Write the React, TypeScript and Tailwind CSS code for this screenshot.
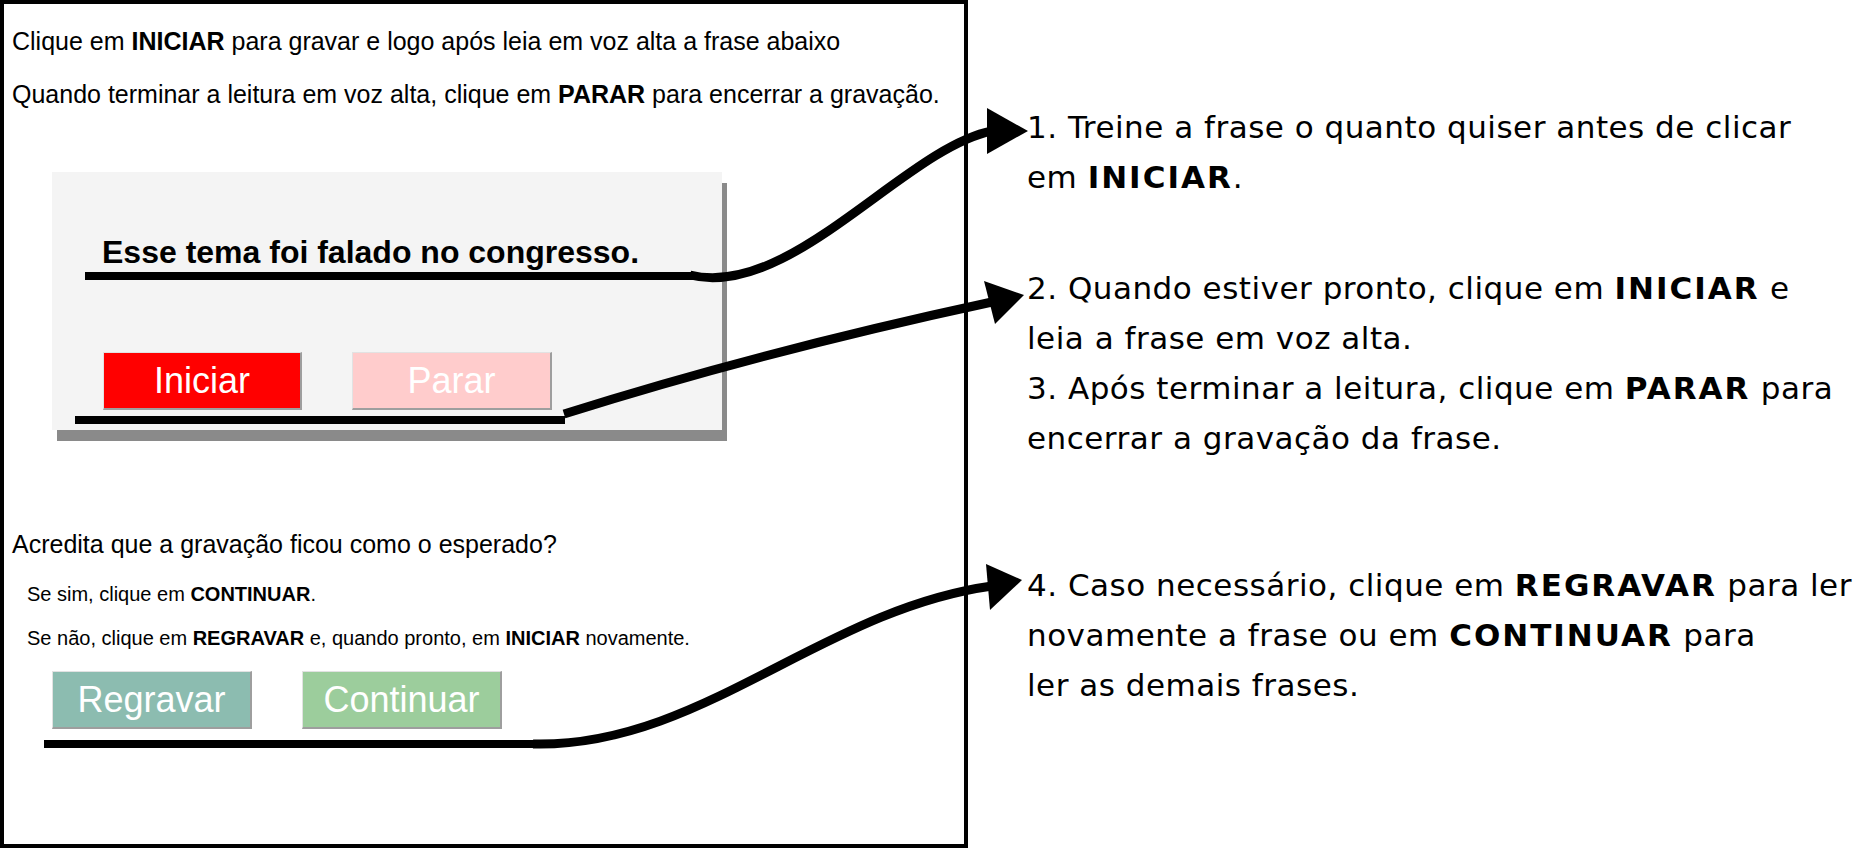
import React from "react";

function Btn({ className, children }: { className: string; children: React.ReactNode }) {
  return (
    <div
      className={
        "h-[58px] border-t border-l border-t-[#e2e2e2] border-l-[#e2e2e2] border-r-2 border-b-2 border-r-[#9e9e9e] border-b-[#9e9e9e] text-white text-center text-[36px] leading-[55px] " +
        className
      }
    >
      {children}
    </div>
  );
}

function B({ children }: { children: React.ReactNode }) {
  return <b className="tracking-[2px]">{children}</b>;
}

export default function App() {
  return (
    <div className="relative w-[1853px] h-[848px] bg-white overflow-hidden flex text-black font-['Liberation_Sans',Arial,sans-serif]">
      <div className="w-[968px] h-[848px] shrink-0 border-4 border-black pl-[8px] pt-[23px]">
        <p className="text-[25px] leading-[28px] whitespace-nowrap">
          Clique em <b>INICIAR</b> para gravar e logo após leia em voz alta a frase abaixo
        </p>
        <p className="mt-[25px] text-[25px] leading-[28px] whitespace-nowrap">
          Quando terminar a leitura em voz alta, clique em <b>PARAR</b> para encerrar a gravação.
        </p>

        <div className="ml-[40px] mt-[64px] w-[670px] h-[258px] bg-[#f4f4f4] shadow-[5px_11px_0_#8a8a8a] pt-[62px]">
          <p className="ml-[50px] text-[32px] leading-[36px] font-bold whitespace-nowrap">
            Esse tema foi falado no congresso.
          </p>
          <div className="ml-[33px] mt-[2px] w-[608px] h-[8px] bg-black" />
          <div className="mt-[72px] ml-[51px] flex gap-[50px]">
            <Btn className="w-[199px] bg-[#ff0000]">Iniciar</Btn>
            <Btn className="w-[200px] bg-[#ffcccc]">Parar</Btn>
          </div>
          <div className="ml-[23px] mt-[6px] w-[490px] h-[8px] bg-black" />
        </div>

        <p className="mt-[100px] text-[25px] leading-[28px] whitespace-nowrap">
          Acredita que a gravação ficou como o esperado?
        </p>
        <p className="mt-[25px] ml-[15px] text-[20px] leading-[23px] whitespace-nowrap">
          Se sim, clique em <b>CONTINUAR</b>.
        </p>
        <p className="mt-[21px] ml-[15px] text-[20px] leading-[23px] whitespace-nowrap">
          Se não, clique em <b>REGRAVAR</b> e, quando pronto, em <b>INICIAR</b> novamente.
        </p>
        <div className="mt-[21px] ml-[40px] flex gap-[50px]">
          <Btn className="w-[200px] bg-[#8cbcb0]">Regravar</Btn>
          <Btn className="w-[200px] bg-[#9ccd9c]">Continuar</Btn>
        </div>
        <div className="ml-[32px] mt-[11px] w-[491px] h-[8px] bg-black" />
      </div>

      <div className="flex-1 pl-[59px] font-['DejaVu_Sans',Verdana,sans-serif] text-[31px] leading-[50px] tracking-[0.5px] whitespace-nowrap">
        <p className="mt-[102px]">
          1. Treine a frase o quanto quiser antes de clicar
          <br />
          em <B>INICIAR</B>.
        </p>
        <p className="mt-[61px]">
          2. Quando estiver pronto, clique em <B>INICIAR</B> e
          <br />
          leia a frase em voz alta.
          <br />
          3. Após terminar a leitura, clique em <B>PARAR</B> para
          <br />
          encerrar a gravação da frase.
        </p>
        <p className="mt-[97px]">
          4. Caso necessário, clique em <B>REGRAVAR</B> para ler
          <br />
          novamente a frase ou em <B>CONTINUAR</B> para
          <br />
          ler as demais frases.
        </p>
      </div>

      <svg
        className="absolute left-0 top-0 pointer-events-none"
        width="1853"
        height="848"
        viewBox="0 0 1853 848"
      >
        <path d="M 690 275 C 790 300, 905 148, 992 131" fill="none" stroke="#000" strokeWidth="9" />
        <polygon points="987,108 1028,131 987,154" fill="#000" />

        <path d="M 564 414 Q 760 352, 992 302" fill="none" stroke="#000" strokeWidth="9" />
        <polygon points="984,281 1024,295 995,324" fill="#000" />

        <path d="M 533 744 C 700 748, 820 610, 992 586" fill="none" stroke="#000" strokeWidth="9" />
        <polygon points="986,564 1022,580 990,610" fill="#000" />
      </svg>
    </div>
  );
}
